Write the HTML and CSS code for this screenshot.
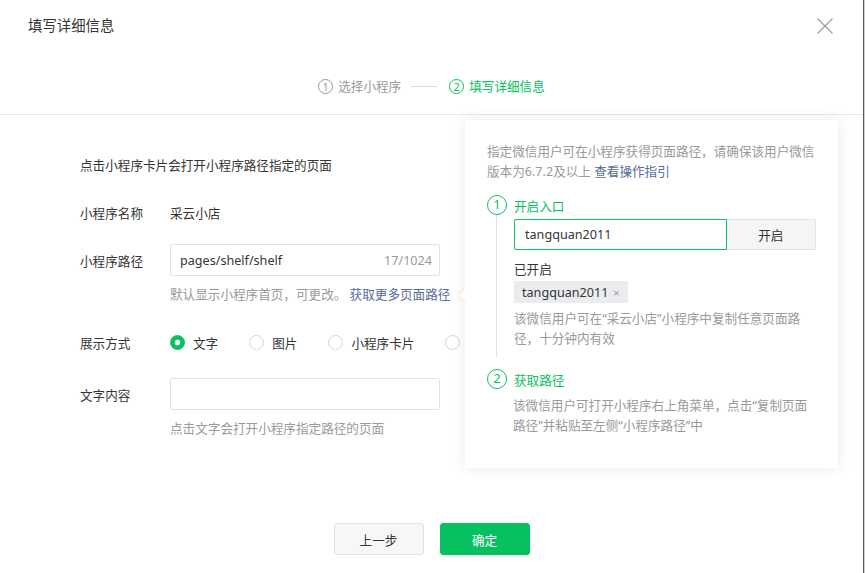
FILE: index.html
```html
<!DOCTYPE html>
<html lang="zh-CN">
<head>
<meta charset="utf-8">
<title>填写详细信息</title>
<link rel="stylesheet" href="styles.css">
</head>
<body>
<div class="dialog">
  <div class="header">
    <div class="title">填写详细信息</div>
    <svg class="close" width="16" height="16" viewBox="0 0 16 16"><path d="M0.5 0.5 L15.5 15.5 M15.5 0.5 L0.5 15.5" stroke="#9a9a9a" stroke-width="1.1" fill="none"/></svg>
  </div>
  <div class="steps">
    <div class="step">
      <span class="step-num">1</span><span>选择小程序</span>
    </div>
    <span class="step-line"></span>
    <div class="step active">
      <span class="step-num">2</span><span>填写详细信息</span>
    </div>
  </div>
  <div class="body">
    <div class="intro">点击小程序卡片会打开小程序路径指定的页面</div>
    <div class="row row-name">
      <div class="label">小程序名称</div>
      <div class="value">采云小店</div>
    </div>
    <div class="row row-path">
      <div class="label">小程序路径</div>
      <div class="input"><span>pages/shelf/shelf</span><span class="counter">17/1024</span></div>
    </div>
    <div class="hint">默认显示小程序首页，可更改。 <a class="link">获取更多页面路径</a></div>
    <div class="row row-mode">
      <div class="label">展示方式</div>
      <div class="radios">
        <div class="radio checked"><span class="dot"></span>文字</div>
        <div class="radio"><span class="dot"></span>图片</div>
        <div class="radio"><span class="dot"></span>小程序卡片</div>
        <div class="radio"><span class="dot"></span>链接</div>
      </div>
    </div>
    <div class="row row-text">
      <div class="label">文字内容</div>
      <div class="input"></div>
    </div>
    <div class="hint">点击文字会打开小程序指定路径的页面</div>
  </div>
  <div class="footer">
    <button class="btn btn-default">上一步</button>
    <button class="btn btn-primary">确定</button>
  </div>

  <div class="popover">
    <span class="arrow"></span>
    <p class="pop-desc">指定微信用户可在小程序获得页面路径，请确保该用户微信<br>版本为6.7.2及以上 <a class="link">查看操作指引</a></p>
    <div class="pop-step">
      <div class="pop-step-head"><span class="pop-num">1</span><span>开启入口</span></div>
      <div class="pop-step-body with-line">
        <div class="open-group">
          <div class="open-input">tangquan2011</div>
          <div class="open-btn">开启</div>
        </div>
        <div class="opened">已开启</div>
        <div class="tag">tangquan2011<span class="tag-x">×</span></div>
        <p class="pop-note">该微信用户可在“采云小店”小程序中复制任意页面路<br>径，十分钟内有效</p>
      </div>
    </div>
    <div class="pop-step">
      <div class="pop-step-head"><span class="pop-num">2</span><span>获取路径</span></div>
      <div class="pop-step-body">
        <p class="pop-note">该微信用户可打开小程序右上角菜单，点击“复制页面<br>路径”并粘贴至左侧“小程序路径”中</p>
      </div>
    </div>
  </div>
</div>
<div class="edge"></div>
</body>
</html>
```

FILE: styles.css
```css
* { box-sizing: border-box; }
html, body { margin: 0; padding: 0; }
body {
  display: flex;
  width: 865px;
  height: 573px;
  overflow: hidden;
  background: #dcdcdc;
  font-family: "Noto Sans", "Noto Sans CJK SC", sans-serif;
  font-size: 12.6px;
  color: #353535;
}
.dialog {
  position: relative;
  width: 863px;
  height: 573px;
  background: #fff;
  flex: none;
}
.edge {
  width: 2px;
  height: 573px;
  background: linear-gradient(to right, #5a5a5a 0 1px, #cfcfcf 1px);
}
.header {
  height: 50px;
  display: flex;
  align-items: center;
  justify-content: space-between;
  padding: 0 30px 0 28px;
}
.title {
  font-size: 14.4px;
  color: #353535;
  margin-top: -1px;
}
.close { display: block; margin-top: 1px; }

.steps {
  display: flex;
  align-items: center;
  justify-content: center;
  padding: 26px 0 17px;
  height: 65px;
  border-bottom: 1px solid #e7e7e7;
  color: #9a9a9a;
}
.step {
  display: flex;
  align-items: center;
  gap: 5px;
  line-height: 20px;
}
.step-num {
  width: 15px;
  height: 15px;
  border: 1px solid currentColor;
  border-radius: 50%;
  font-size: 11px;
  line-height: 13px;
  text-align: center;
}
.step.active { color: #07c160; }
.step-line {
  width: 26px;
  height: 1px;
  background: #d9d9d9;
  margin: 0 12px 0 10px;
}

.body {
  padding: 41px 0 0 80px;
}
.intro { line-height: 20px; }
.row {
  display: flex;
  align-items: center;
  height: 32px;
}
.label { width: 90px; flex: none; }
.row-name { margin-top: 20px; }
.row-path { margin-top: 16px; }
.row-mode { margin-top: 21px; }
.row-text { margin-top: 20px; }
.input {
  width: 270px;
  height: 32px;
  border: 1px solid #e2e2e2;
  border-radius: 2px;
  display: flex;
  align-items: center;
  justify-content: space-between;
  padding: 0 7px 0 9px;
}
.counter { color: #9a9a9a; }
.hint {
  margin: 9px 0 0 90px;
  line-height: 20px;
  color: #9a9a9a;
}
.link { color: #576b95; text-decoration: none; }
.radios { display: flex; gap: 31px; }
.radio {
  display: flex;
  align-items: center;
  gap: 8px;
}
.dot {
  width: 15px;
  height: 15px;
  border-radius: 50%;
  border: 1px solid #d5d5d5;
  background: #fff;
}
.radio.checked .dot {
  border-color: #07c160;
  background: radial-gradient(circle, #fff 0 2.6px, #07c160 3.2px);
}

.footer {
  display: flex;
  justify-content: center;
  gap: 16px;
  margin-top: 84px;
}
.btn {
  width: 90px;
  height: 32px;
  border-radius: 3px;
  font: inherit;
  font-size: 12.6px;
  padding: 0;
  cursor: pointer;
}
.btn-default {
  background: #f7f7f7;
  border: 1px solid #e1e1e1;
  color: #353535;
}
.btn-primary {
  background: #07c160;
  border: 1px solid #07c160;
  color: #fff;
}

.popover {
  position: absolute;
  left: 465px;
  top: 120px;
  width: 373px;
  height: 348px;
  background: #fff;
  box-shadow: 0 0 14px rgba(0, 0, 0, 0.09);
  padding: 22px 22px 0 22px;
}
.arrow {
  position: absolute;
  left: -4px;
  top: 171px;
  width: 9px;
  height: 9px;
  background: #fff;
  transform: rotate(45deg);
  box-shadow: -2px 2px 3px rgba(0, 0, 0, 0.04);
}
.pop-desc {
  margin: 0;
  line-height: 20px;
  color: #9a9a9a;
}
.pop-step { margin-top: 13px; }
.pop-step + .pop-step { margin-top: 12px; }
.pop-step-head {
  display: flex;
  align-items: center;
  gap: 7px;
  color: #07c160;
  height: 20px;
}
.pop-num {
  width: 20px;
  height: 20px;
  border: 1.4px solid #07c160;
  border-radius: 50%;
  text-align: center;
  font-size: 13px;
  line-height: 17px;
}
.pop-step-body {
  margin-left: 9px;
  padding: 4px 0 0 17px;
}
.pop-step-body .pop-note { margin-top: 3px; }
.with-line {
  border-left: 1px solid #e0e0e0;
  padding-bottom: 8px;
}
.with-line .pop-note { margin-top: 6px; }
.open-group {
  display: flex;
  height: 31px;
}
.open-input {
  width: 214px;
  border: 1px solid #07c160;
  border-radius: 2px 0 0 2px;
  display: flex;
  align-items: center;
  padding-left: 10px;
}
.open-btn {
  width: 90px;
  background: #f5f5f5;
  border: 1px solid #e4e4e4;
  border-left: none;
  border-radius: 0 2px 2px 0;
  display: flex;
  align-items: center;
  justify-content: center;
}
.opened {
  margin-top: 10px;
  line-height: 20px;
}
.tag {
  display: inline-flex;
  align-items: center;
  height: 22px;
  margin-top: 1px;
  padding: 0 8px 0 8px;
  background: #eaecef;
  border-radius: 2px;
}
.tag-x {
  color: #9a9a9a;
  font-size: 11px;
  margin-left: 5px;
}
.pop-note {
  margin: 4px 0 0;
  line-height: 20px;
  color: #9a9a9a;
}
```
